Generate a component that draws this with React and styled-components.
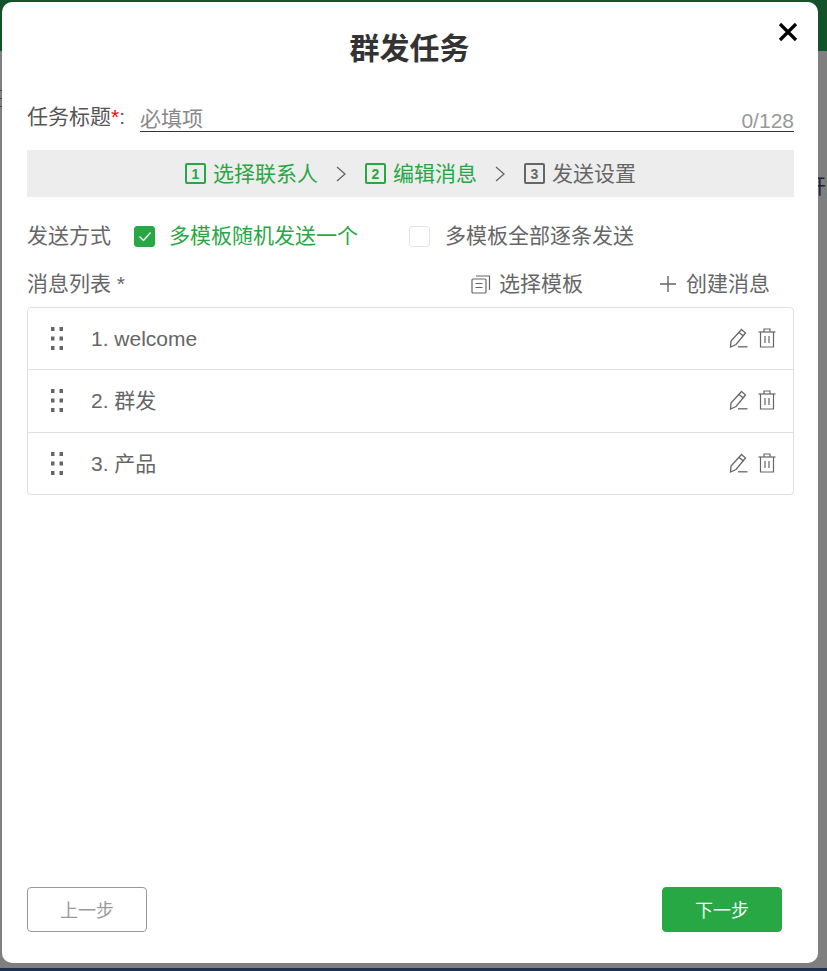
import React from 'react';
import styled, { createGlobalStyle } from 'styled-components';

const green = '#28a745';
const grey = '#666';

const GlobalStyle = createGlobalStyle`
  html, body {
    margin: 0;
    padding: 0;
    height: 100%;
    overflow: hidden;
    background: #7f7f7f;
    font-family: "Liberation Sans", "Noto Sans CJK SC", sans-serif;
  }
  * { box-sizing: border-box; }
`;

const Page = styled.div`
  height: 971px;
  display: flex;
  flex-flow: column;
  background: #7f7f7f;
`;

const TopBar = styled.div`
  height: 51px;
  background: #14532a;
`;

const PageBody = styled.div`
  flex: 1;
  position: relative;
  overflow: hidden;
`;

const BehindText = styled.span`
  position: absolute;
  left: 806px;
  top: 120px;
  font-size: 20px;
  color: #223;
  white-space: nowrap;
`;

const BehindTicks = styled.div`
  position: absolute;
  left: 0;
  top: 39px;
  width: 2px;
  height: 17px;
  border-top: 1px solid #445;
  border-bottom: 1px solid #445;
  display: flex;
  align-items: center;
  &::before {
    content: '';
    width: 2px;
    height: 1px;
    background: #445;
  }
`;

const BottomBar = styled.div`
  height: 3px;
  background: #1f2f4f;
`;

const Modal = styled.div`
  position: fixed;
  left: 2px;
  top: 2px;
  width: 816px;
  height: 961px;
  background: #fff;
  border-radius: 10px;
  padding: 0 24px 31px 25px;
  display: flex;
  flex-flow: column;
  color: ${grey};
  font-size: 21px;
`;

const Close = styled.svg`
  position: absolute;
  right: 20px;
  top: 20px;
`;

const Title = styled.h1`
  margin: 0 2px 0 0;
  height: 92px;
  padding-top: 26px;
  text-align: center;
  font-size: 30px;
  line-height: 42px;
  font-weight: bold;
  color: #333;
`;

const TitleRow = styled.div`
  display: flex;
  align-items: flex-end;
  height: 38px;
  margin-bottom: 18px;
`;

const TitleLabel = styled.label`
  width: 113px;
  height: 30px;
  line-height: 30px;
  color: #555;
  flex: none;
`;

const Star = styled.span`
  color: #f00;
`;

const InputLine = styled.div`
  flex: 1;
  display: flex;
  justify-content: space-between;
  align-items: flex-end;
  height: 38px;
  border-bottom: 1px solid #333;
`;

const Placeholder = styled.span`
  color: #888;
  line-height: 24px;
`;

const Counter = styled.span`
  color: #999;
  line-height: 22px;
  margin-bottom: -1px;
`;

const Steps = styled.div`
  height: 47px;
  background: #ededed;
  display: flex;
  align-items: center;
  justify-content: center;
`;

const Step = styled.span`
  display: flex;
  align-items: center;
  gap: 7px;
  color: ${p => (p.$active ? green : grey)};
`;

const StepLabel = styled.span`
  margin-bottom: 4px;
`;

const StepNum = styled.span`
  width: 21px;
  height: 21px;
  border: 2px solid currentColor;
  border-radius: 2px;
  display: flex;
  align-items: center;
  justify-content: center;
  font-size: 14px;
  font-weight: bold;
  line-height: 1;
`;

const Chevron = styled.svg`
  margin: 0 19px 0 18px;
  flex: none;
`;

const MethodRow = styled.div`
  display: flex;
  align-items: center;
  height: 48px;
  margin-top: 15px;
`;

const MethodLabel = styled.span`
  width: 107px;
  margin-bottom: 4px;
`;

const Check = styled.span`
  width: 21px;
  height: 21px;
  border-radius: 3px;
  display: flex;
  align-items: center;
  justify-content: center;
  flex: none;
  margin-right: ${p => p.$gap}px;
  background: ${p => (p.$on ? green : '#fff')};
  border: 1px solid ${p => (p.$on ? green : '#e4e4e4')};
`;

const MethodText = styled.span`
  color: ${p => (p.$on ? green : grey)};
  width: ${p => p.$w}px;
  margin-bottom: 4px;
`;

const ListHead = styled.div`
  display: flex;
  align-items: center;
  height: 48px;
  margin-bottom: -1px;
`;

const ListTitle = styled.span`
  flex: 1;
  margin-bottom: 4px;
`;

const HeadAction = styled.span`
  display: flex;
  align-items: center;
  gap: 8px;
  margin-right: ${p => p.$right}px;
`;

const HeadLabel = styled.span`
  margin-bottom: 4px;
`;

const List = styled.div`
  border: 1px solid #e0e0e0;
  border-radius: 4px;
`;

const RowName = styled.span`
  flex: 1;
  margin-left: 27px;
  margin-bottom: 4px;
`;

const Row = styled.div`
  height: 62.5px;
  display: flex;
  align-items: center;
  padding: 0 17px 0 22px;
  &:first-child {
    height: 61.4px;
  }
  &:first-child ${RowName} {
    margin-bottom: 0;
  }
  & + & {
    border-top: 1px solid #e0e0e0;
  }
`;

const RowIcons = styled.span`
  display: flex;
  gap: 10px;
  margin-top: -2px;
`;

const Footer = styled.div`
  margin-top: auto;
  display: flex;
  justify-content: space-between;
  padding-right: 12px;
`;

const FootButton = styled.button`
  width: 120px;
  height: 45px;
  border-radius: 4px;
  font-family: inherit;
  font-size: 18px;
  padding-bottom: 3px;
  border: 1px solid ${p => (p.$primary ? green : '#999')};
  background: ${p => (p.$primary ? green : '#fff')};
  color: ${p => (p.$primary ? '#fff' : '#999')};
`;

const Tick = () => (
  <svg width="14" height="11" viewBox="0 0 14 11" fill="none" stroke="#fff" strokeWidth="1.3">
    <path d="M1.5 5.5 L5.5 9.5 L12.5 1.5" />
  </svg>
);

const Arrow = () => (
  <Chevron width="10" height="16" viewBox="0 0 10 16" fill="none" stroke="#666" strokeWidth="1.3">
    <path d="M1 1 L9 8 L1 15" />
  </Chevron>
);

const DragDots = () => (
  <svg width="14" height="24" viewBox="0 0 14 24" fill="#666">
    {[0, 9.5, 19].map(y => (
      <React.Fragment key={y}>
        <rect x="1" y={y} width="3.5" height="4" />
        <rect x="9.5" y={y} width="3.5" height="4" />
      </React.Fragment>
    ))}
  </svg>
);

const Pencil = () => (
  <svg width="19" height="20" viewBox="0 0 19 20" fill="none" stroke="#666" strokeWidth="1.3">
    <path d="M12.5 1.5 L16.5 5 L7 16.5 L1.5 19 L2 13 Z" />
    <path d="M10 4.5 L14.5 8" />
    <path d="M9 18.8 L18.5 18.8" />
  </svg>
);

const Trash = () => (
  <svg width="18" height="20" viewBox="0 0 18 20" fill="none" stroke="#666" strokeWidth="1.2">
    <path d="M0.5 4 L17.5 4" />
    <path d="M6 4 L6 1 L12 1 L12 4" />
    <path d="M2.5 4 L2.5 19 L15.5 19 L15.5 4" />
    <path d="M7 8 L7 15 M11 8 L11 15" />
  </svg>
);

const TemplateIcon = () => (
  <svg width="20" height="19" viewBox="0 0 20 19" fill="none" stroke="#666" strokeWidth="1.2">
    <rect x="1" y="4" width="14" height="14" rx="1" />
    <path d="M5 1 L18.5 1 L18.5 15" />
    <path d="M4.5 8.5 L11.5 8.5 M4.5 12.5 L11.5 12.5" />
  </svg>
);

const PlusIcon = () => (
  <svg width="19" height="18" viewBox="0 0 19 18" fill="none" stroke="#666" strokeWidth="1.4">
    <path d="M9 1 L9 17 M1 9 L17 9" />
  </svg>
);

const messages = ['1. welcome', '2. 群发', '3. 产品'];

export default function App() {
  return (
    <>
      <GlobalStyle />
      <Page>
        <TopBar />
        <PageBody>
          <BehindTicks />
          <BehindText>开始</BehindText>
        </PageBody>
        <BottomBar />
      </Page>
      <Modal>
        <Close width="20" height="20" viewBox="0 0 20 20" fill="none" stroke="#000" strokeWidth="3.2">
          <path d="M2 2 L18 18 M18 2 L2 18" />
        </Close>
        <Title>群发任务</Title>
        <TitleRow>
          <TitleLabel>任务标题<Star>*</Star>:</TitleLabel>
          <InputLine>
            <Placeholder>必填项</Placeholder>
            <Counter>0/128</Counter>
          </InputLine>
        </TitleRow>
        <Steps>
          <Step $active><StepNum>1</StepNum><StepLabel>选择联系人</StepLabel></Step>
          <Arrow />
          <Step $active><StepNum>2</StepNum><StepLabel>编辑消息</StepLabel></Step>
          <Arrow />
          <Step><StepNum>3</StepNum><StepLabel>发送设置</StepLabel></Step>
        </Steps>
        <MethodRow>
          <MethodLabel>发送方式</MethodLabel>
          <Check $on $gap={14}><Tick /></Check>
          <MethodText $on $w={240}>多模板随机发送一个</MethodText>
          <Check $gap={15} />
          <MethodText>多模板全部逐条发送</MethodText>
        </MethodRow>
        <ListHead>
          <ListTitle>消息列表 *</ListTitle>
          <HeadAction $right={76}><TemplateIcon /><HeadLabel>选择模板</HeadLabel></HeadAction>
          <HeadAction $right={24}><PlusIcon /><HeadLabel>创建消息</HeadLabel></HeadAction>
        </ListHead>
        <List>
          {messages.map(name => (
            <Row key={name}>
              <DragDots />
              <RowName>{name}</RowName>
              <RowIcons><Pencil /><Trash /></RowIcons>
            </Row>
          ))}
        </List>
        <Footer>
          <FootButton>上一步</FootButton>
          <FootButton $primary>下一步</FootButton>
        </Footer>
      </Modal>
    </>
  );
}
